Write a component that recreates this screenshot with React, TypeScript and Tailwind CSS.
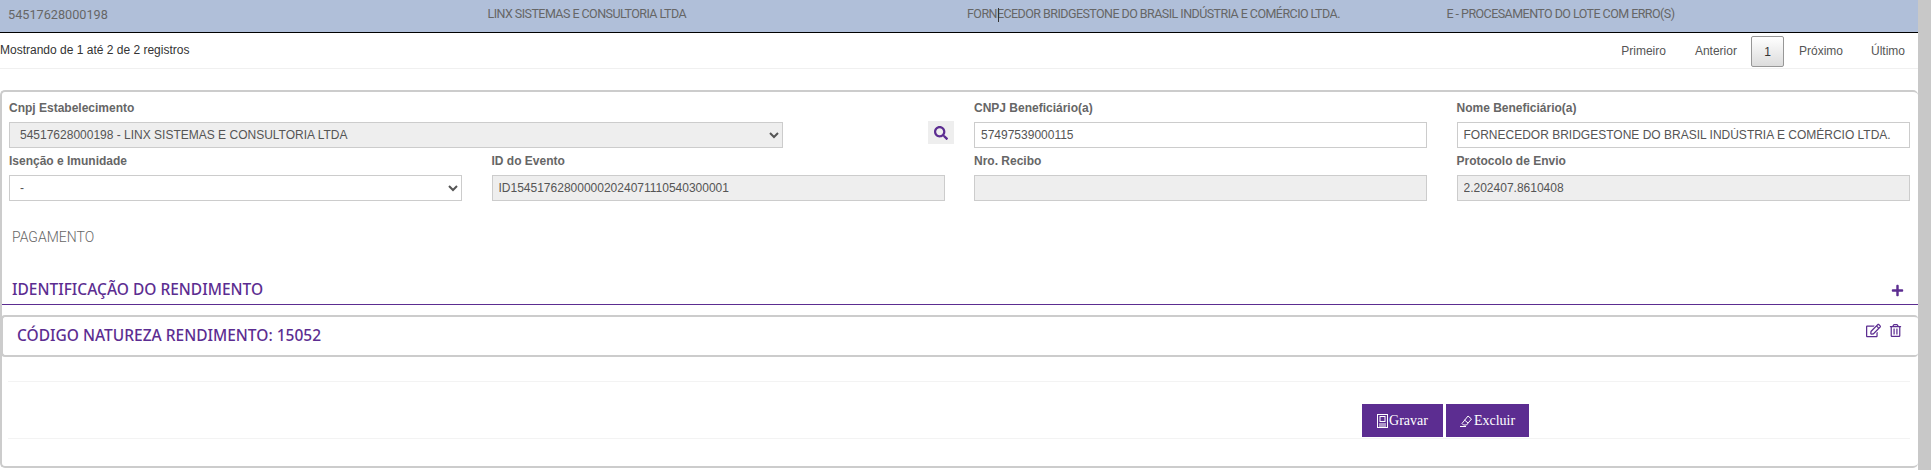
import { FaPlus, FaRegEdit, FaRegTrashAlt, FaSearch } from "react-icons/fa";

const bandCols = [
  "54517628000198",
  "LINX SISTEMAS E CONSULTORIA LTDA",
  "FORNECEDOR BRIDGESTONE DO BRASIL INDÚSTRIA E COMÉRCIO LTDA.",
  "E - PROCESAMENTO DO LOTE COM ERRO(S)",
];

const labelCls = "block h-[14px] text-[12px] leading-[14px] font-bold text-[#666]";
const fieldCls =
  "block h-[26px] w-full border border-[#ccc] px-[6px] text-[12px] text-[#555] outline-none font-['Liberation_Sans',sans-serif]";

const Field = ({ label, value, muted }: { label: string; value: string; muted?: boolean }) => (
  <div className="flex flex-col gap-[7px]">
    <label className={labelCls}>{label}</label>
    <input readOnly value={value} className={`${fieldCls} ${muted ? "bg-[#eee]" : "bg-white"}`} />
  </div>
);

const PageLink = ({ children }: { children: string }) => (
  <span className="block pb-[2px] text-[12px] text-[#555]">{children}</span>
);

const SaveIcon = () => (
  <svg width="11" height="14" viewBox="0 0 11 14" fill="none" stroke="currentColor" strokeWidth="1">
    <rect x="0.5" y="0.5" width="10" height="13" />
    <rect x="3" y="2.5" width="5" height="5" />
    <path d="M2 10h7M2 12h7" />
  </svg>
);

const EraserIcon = () => (
  <svg width="13" height="12" viewBox="0 0 13 12" fill="none" stroke="currentColor" strokeWidth="1">
    <path d="M8 1l3.5 3-5 6H3.5L2 8.5z" />
    <path d="M4.5 5l3.5 3M0 11.5h6" />
  </svg>
);

const ActionButton = ({ icon, label, width }: { icon: React.ReactNode; label: string; width: string }) => (
  <button
    className={`mb-px flex h-[33px] items-center justify-center gap-px bg-[#5c2d91] font-['Liberation_Serif',serif] text-[14px] text-white ${width}`}
  >
    {icon}
    {label}
  </button>
);

export default function App() {
  return (
    <div className="flex h-[470px] w-[1931px] overflow-hidden bg-white font-['Liberation_Sans',sans-serif]">
      <div className="w-[1918px] shrink-0">
        <div className="relative grid h-[33px] grid-cols-4 items-center border-b border-black bg-[#b0bfd9] pb-[3px] font-['Roboto',sans-serif] text-[12.5px] tracking-[-0.55px] text-[#666]">
          {bandCols.map((c, i) => (
            <div key={c} className={i === 0 ? "pl-[8px] text-[12.7px] tracking-normal" : "truncate pl-[8px]"}>
              {c}
            </div>
          ))}
          <span className="absolute left-[998px] top-[8px] h-[14px] w-px bg-[#333]" />
        </div>

        <div className="flex h-[36px] items-center justify-between border-b border-[#f0f0f0] pt-[2px] text-[12px] text-[#333]">
          <span className="pb-[3px]">Mostrando de 1 até 2 de 2 registros</span>
          <div className="flex items-center pr-[13px]">
            <PageLink>Primeiro</PageLink>
            <span className="ml-[29px]">
              <PageLink>Anterior</PageLink>
            </span>
            <span className="ml-[14px] flex h-[31px] w-[33px] items-center justify-center rounded-[2px] border border-[#979797] bg-gradient-to-b from-white to-[#dcdcdc] text-[12px] text-[#333]">
              1
            </span>
            <span className="ml-[15px]">
              <PageLink>Próximo</PageLink>
            </span>
            <span className="ml-[28px]">
              <PageLink>Último</PageLink>
            </span>
          </div>
        </div>

        <div className="mt-[21px] h-[378px] rounded-[5px] border-2 border-r-0 border-[#ccc] pt-[9px]">
          <div className="grid grid-cols-[repeat(4,453px)] gap-x-[29.5px] gap-y-[6px] pl-[7px]">
            <div className="col-span-2 flex w-[945px] flex-col gap-[7px]">
              <label className={labelCls}>Cnpj Estabelecimento</label>
              <div className="flex items-start justify-between">
                <select className={`${fieldCls} !w-[774px] bg-[#eee]`}>
                  <option>54517628000198 - LINX SISTEMAS E CONSULTORIA LTDA</option>
                </select>
                <span className="-mt-px flex h-[23px] w-[26px] items-center justify-center bg-[#eee] text-[#5c2d91]">
                  <FaSearch size={14} />
                </span>
              </div>
            </div>
            <Field label="CNPJ Beneficiário(a)" value="57497539000115" />
            <Field
              label="Nome Beneficiário(a)"
              value="FORNECEDOR BRIDGESTONE DO BRASIL INDÚSTRIA E COMÉRCIO LTDA."
            />
            <div className="flex flex-col gap-[7px]">
              <label className={labelCls}>Isenção e Imunidade</label>
              <select className={`${fieldCls} bg-white`}>
                <option>-</option>
              </select>
            </div>
            <Field label="ID do Evento" value="ID154517628000002024071110540300001" muted />
            <Field label="Nro. Recibo" value="" muted />
            <Field label="Protocolo de Envio" value="2.202407.8610408" muted />
          </div>

          <div className="mt-[27px] pl-[10px] font-['Roboto',sans-serif] text-[14px] font-light leading-[18px] text-[#666]">
            PAGAMENTO
          </div>

          <div className="mt-[31px] flex h-[28px] items-center justify-between border-b border-[#5c2d91] pb-[2px] pl-[10px] pr-[14px] font-['Noto_Sans',sans-serif] text-[15.5px] font-medium text-[#5c2d91]">
            <span>IDENTIFICAÇÃO DO RENDIMENTO</span>
            <FaPlus size={13} className="mt-[2px]" />
          </div>

          <div className="-ml-px mt-[10px] flex h-[42px] items-start justify-between rounded-[4px] border-2 border-r-0 border-[#ccc] pl-[14px] pr-[16px] text-[#5c2d91]">
            <span className="pt-[6px] font-['Noto_Sans',sans-serif] text-[15.5px] font-medium leading-[24px]">
              CÓDIGO NATUREZA RENDIMENTO: 15052
            </span>
            <span className="flex gap-[8px] pt-[6px]">
              <FaRegEdit size={15} />
              <FaRegTrashAlt size={13} className="mt-px" />
            </span>
          </div>

          <div className="ml-[6px] mr-[8px] mt-[24px] flex h-[58px] items-end justify-end gap-[3px] border-b border-t border-[#f3f3f3] pr-[381px]">
            <ActionButton icon={<SaveIcon />} label="Gravar" width="w-[81px]" />
            <ActionButton icon={<EraserIcon />} label="Excluir" width="w-[83px]" />
          </div>
        </div>
      </div>
      <div className="h-full flex-1 bg-[#c8c8c8]" />
    </div>
  );
}
